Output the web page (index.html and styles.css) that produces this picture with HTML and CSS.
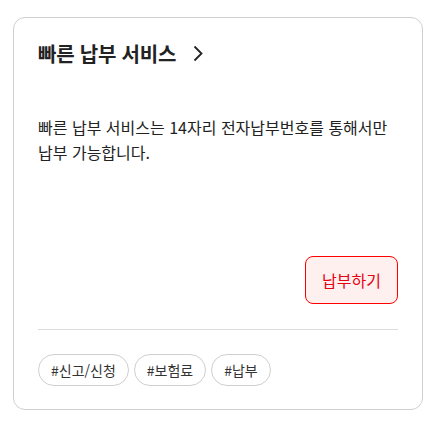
FILE: index.html
```html
<!DOCTYPE html>
<html lang="ko">

<head>
  <meta charset="UTF-8" />
  <meta name="viewport" content="width=device-width, initial-scale=1.0" />
  <title>빠른 납부 서비스</title>
  <link rel="stylesheet" href="styles.css">
</head>

<body>
  <div class="card">
    <a class="card-title" href="#">
      빠른 납부 서비스
      <svg class="chevron" width="10" height="17" viewBox="0 0 10 17">
        <path d="M1.5 1.5 L8.5 8.5 L1.5 15.5" fill="none" stroke="#222" stroke-width="1.8" />
      </svg>
    </a>
    <p class="card-desc">빠른 납부 서비스는 14자리 전자납부번호를 통해서만 납부 가능합니다.</p>
    <div class="card-actions">
      <button class="btn-pay">납부하기</button>
    </div>
    <ul class="tags">
      <li>#신고/신청</li>
      <li>#보험료</li>
      <li>#납부</li>
    </ul>
  </div>
</body>

</html>
```

FILE: styles.css
```css
body {
  margin: 0;
  padding: 17px 13px;
  font-family: "Noto Sans CJK KR", "Noto Sans", sans-serif;
  color: #222;
  background: #fff;
}

.card {
  width: 360px;
  padding: 22px 24px 23px;
  border: 1px solid #cfcfcf;
  border-radius: 12px;
}

.card-title {
  display: flex;
  align-items: center;
  gap: 17px;
  height: 26px;
  font-size: 20px;
  font-weight: 700;
  color: #222;
  text-decoration: none;
  letter-spacing: -0.2px;
}

.chevron {
  margin-top: 1px;
}

.card-desc {
  margin: 49px 0 0;
  font-size: 16px;
  line-height: 25px;
  word-break: keep-all;
  color: #222;
}

.card-actions {
  display: flex;
  justify-content: flex-end;
  margin-top: 91px;
  padding-bottom: 25px;
  border-bottom: 1px solid #dcdcdc;
}

.btn-pay {
  width: 93px;
  height: 48px;
  border: 1px solid #ff0000;
  border-radius: 8px;
  background: #fff0f0;
  color: #e60012;
  font-family: inherit;
  font-size: 16px;
}

.tags {
  display: flex;
  gap: 5px;
  list-style: none;
  margin: 24px 0 0;
  padding: 0;
}

.tags li {
  height: 30px;
  line-height: 30px;
  padding: 0 12px;
  border: 1px solid #cfcfcf;
  border-radius: 16px;
  font-size: 14px;
  color: #333;
}
```
